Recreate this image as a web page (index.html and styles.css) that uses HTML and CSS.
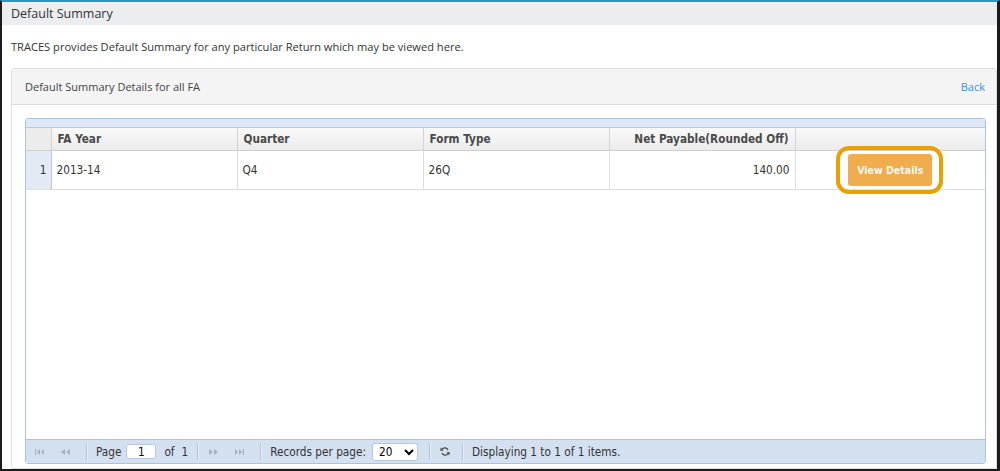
FILE: index.html
```html
<!DOCTYPE html>
<html lang="en">

<head>
    <meta charset="UTF-8">
    <title>Default Summary</title>
    <link rel="stylesheet" href="styles.css">
</head>

<body>
    <div class="page">
        <div class="title-bar">Default Summary</div>
        <p class="intro">TRACES provides Default Summary for any particular Return which may be viewed here.</p>

        <div class="panel">
            <div class="panel-heading">
                <span>Default Summary Details for all FA</span>
                <a class="back" href="#">Back</a>
            </div>
            <div class="panel-body">
                <div class="grid">
                    <div class="grid-caption"></div>
                    <div class="grid-body">
                        <table class="grid-table">
                            <colgroup>
                                <col class="c-num">
                                <col class="c-data">
                                <col class="c-data">
                                <col class="c-data">
                                <col class="c-data">
                                <col>
                            </colgroup>
                            <thead>
                                <tr>
                                    <th></th>
                                    <th>FA Year</th>
                                    <th>Quarter</th>
                                    <th>Form Type</th>
                                    <th class="right">Net Payable(Rounded Off)</th>
                                    <th></th>
                                </tr>
                            </thead>
                            <tbody>
                                <tr>
                                    <td class="num">1</td>
                                    <td>2013-14</td>
                                    <td>Q4</td>
                                    <td>26Q</td>
                                    <td class="right">140.00</td>
                                    <td class="center">
                                        <span class="btn-wrap">
                                            <button class="btn-view">View Details</button>
                                            <span class="ring"></span>
                                        </span>
                                    </td>
                                </tr>
                            </tbody>
                        </table>
                    </div>
                    <div class="pager">
                        <span class="pg-btn">
                            <svg width="9" height="6" viewBox="0 0 9 6"><rect x="0" y="0" width="1.2" height="6" fill="#a7b1bd"/><path d="M5 0 L2 3 L5 6 Z M9 0 L6 3 L9 6 Z" fill="#a7b1bd"/></svg>
                        </span>
                        <span class="pg-btn">
                            <svg width="9" height="6" viewBox="0 0 9 6"><path d="M4 0 L0 3 L4 6 Z M9 0 L5 3 L9 6 Z" fill="#a7b1bd"/></svg>
                        </span>
                        <span class="sep"></span>
                        <span class="pg-label">Page</span>
                        <input class="pg-input" type="text" value="1">
                        <span class="pg-of">of</span>
                        <span class="pg-total">1</span>
                        <span class="sep sep-btn"></span>
                        <span class="pg-btn">
                            <svg width="9" height="6" viewBox="0 0 9 6"><path d="M0 0 L4 3 L0 6 Z M5 0 L9 3 L5 6 Z" fill="#a7b1bd"/></svg>
                        </span>
                        <span class="pg-btn">
                            <svg width="9" height="6" viewBox="0 0 9 6"><path d="M0 0 L3 3 L0 6 Z M4 0 L7 3 L4 6 Z" fill="#a7b1bd"/><rect x="7.8" y="0" width="1.2" height="6" fill="#a7b1bd"/></svg>
                        </span>
                        <span class="sep"></span>
                        <span class="pg-label">Records per page:</span>
                        <select class="pg-select">
                            <option>20</option>
                        </select>
                        <span class="sep sep-btn"></span>
                        <span class="pg-btn">
                            <svg width="10" height="11" viewBox="0 0 10 11"><path d="M8 4 A3.3 3.3 0 0 0 2 3.5" fill="none" stroke="#444" stroke-width="1.3"/><path d="M2 7 A3.3 3.3 0 0 0 8 7.5" fill="none" stroke="#444" stroke-width="1.3"/><path d="M0.5 1.5 L3.5 4.5 L0.5 5 Z" fill="#444"/><path d="M9.5 9.5 L6.5 6.5 L9.5 6 Z" fill="#444"/></svg>
                        </span>
                        <span class="sep sep-near"></span>
                        <span>Displaying 1 to 1 of 1 items.</span>
                    </div>
                </div>
            </div>
        </div>
    </div>
</body>

</html>
```

FILE: styles.css
```css
html,
body {
    margin: 0;
    padding: 0;
    background: #fff;
}

body {
    font-family: 'Open Sans', 'Segoe UI', Arial, sans-serif;
    color: #333;
}

.page {
    height: 471px;
    box-sizing: border-box;
    border-top: 2px solid #2a95c6;
    border-left: 2px solid #1b1b1b;
    border-right: 3px solid #1b1b1b;
    border-bottom: 2px solid #1b1b1b;
    overflow: hidden;
    display: flex;
    flex-direction: column;
}

.title-bar {
    height: 23px;
    line-height: 23px;
    background: #ecedf0;
    padding-left: 9px;
    font-size: 12.5px;
    color: #333;
}

.intro {
    margin: 0;
    padding: 13px 9px 12px;
    font-size: 11.1px;
    line-height: 18px;
}

.panel {
    flex: 1;
    margin-left: 9px;
    border: 1px solid #dedede;
    border-radius: 3px 3px 0 0;
    display: flex;
    flex-direction: column;
    min-height: 0;
}

.panel-heading {
    height: 35px;
    background: #f4f4f4;
    border-bottom: 1px solid #dcdcdc;
    display: flex;
    align-items: center;
    justify-content: space-between;
    padding: 0 10px 0 13px;
    font-size: 11px;
    color: #444;
}

.back {
    color: #3d8fd6;
    text-decoration: none;
    font-size: 11px;
    margin-right: 1px;
}

.panel-body {
    flex: 1;
    padding: 13px 10px 5px 13px;
    min-height: 0;
}

.grid {
    height: 346px;
    box-sizing: border-box;
    border: 1px solid #a9c3e3;
    border-radius: 3px;
    display: flex;
    flex-direction: column;
    font-family: 'DejaVu Sans Condensed', 'DejaVu Sans', sans-serif;
    font-stretch: condensed;
    font-size: 11.7px;
    color: #333;
    overflow: hidden;
}

.grid-caption {
    height: 8px;
    background: #dfe8f6;
    border-bottom: 1px solid #b9c9dc;
}

.grid-body {
    flex: 1;
    background: #fff;
}

.grid-table {
    width: 100%;
    border-collapse: collapse;
    table-layout: fixed;
}

.c-num {
    width: 25px;
}

.c-data {
    width: 186px;
}

.grid-table th {
    height: 22px;
    padding: 0 6px;
    text-align: left;
    font-weight: bold;
    color: #4a4a4a;
    background: linear-gradient(#f9f9f9, #ebebeb);
    border-right: 1px solid #d4d4d4;
    border-bottom: 1px solid #d0d0d0;
}

.grid-table td {
    height: 38px;
    padding: 0 5px;
    border-right: 1px solid #dedede;
    border-bottom: 1px solid #dedede;
    white-space: nowrap;
}

.grid-table th:first-child {
    background: #ececec;
}

.grid-table td.num {
    background: #e3eaf4;
    text-align: right;
    padding-right: 4px;
    border-right: 1px solid #b9c9dc;
}

.grid-table th:last-child,
.grid-table td:last-child {
    border-right: none;
}

.right {
    text-align: right !important;
}

.center {
    text-align: center;
}

.btn-wrap {
    position: relative;
    display: inline-block;
    vertical-align: middle;
}

.btn-view {
    display: block;
    width: 84px;
    height: 32px;
    border: none;
    border-radius: 3px;
    background: #f0ad4e;
    color: #fdf6ec;
    font-family: 'DejaVu Sans Condensed', 'DejaVu Sans', sans-serif;
    font-stretch: condensed;
    font-size: 10.5px;
    font-weight: bold;
}

.ring {
    position: absolute;
    top: -8px;
    left: -12px;
    right: -11px;
    bottom: -8px;
    border: 4px solid #e8a100;
    border-radius: 13px;
    pointer-events: none;
}

.pager {
    height: 23px;
    background: #d3e0f0;
    border-top: 1px solid #a9c3e3;
    display: flex;
    align-items: center;
    padding-left: 0;
    color: #333;
    white-space: nowrap;
}

.pg-btn {
    width: 26px;
    flex: none;
    display: flex;
    align-items: center;
    justify-content: center;
}

.sep {
    width: 1px;
    height: 17px;
    background: #b2c4da;
    border-right: 1px solid #e7eef7;
    margin: 0 8px;
    flex: none;
}

.sep-btn {
    margin-right: 1px;
}

.sep-near {
    margin-left: 4px;
}

.pg-label {
    margin-right: 5px;
}

.pg-input {
    width: 30px;
    height: 15px;
    box-sizing: border-box;
    border: 1px solid #b8c8dc;
    border-radius: 3px;
    font-family: inherit;
    font-size: 11.7px;
    text-align: center;
    padding: 0;
    margin: 0 8px 0 0;
}

.pg-of {
    margin-right: 7px;
}

.pg-total {
    margin-right: 1px;
}

.pg-select {
    width: 46px;
    height: 18px;
    border: 1px solid #b8c8dc;
    border-radius: 3px;
    background: #fff;
    font-family: inherit;
    font-size: 11.7px;
    margin: 0 3px 0 1px;
    padding: 0 2px;
}
```
